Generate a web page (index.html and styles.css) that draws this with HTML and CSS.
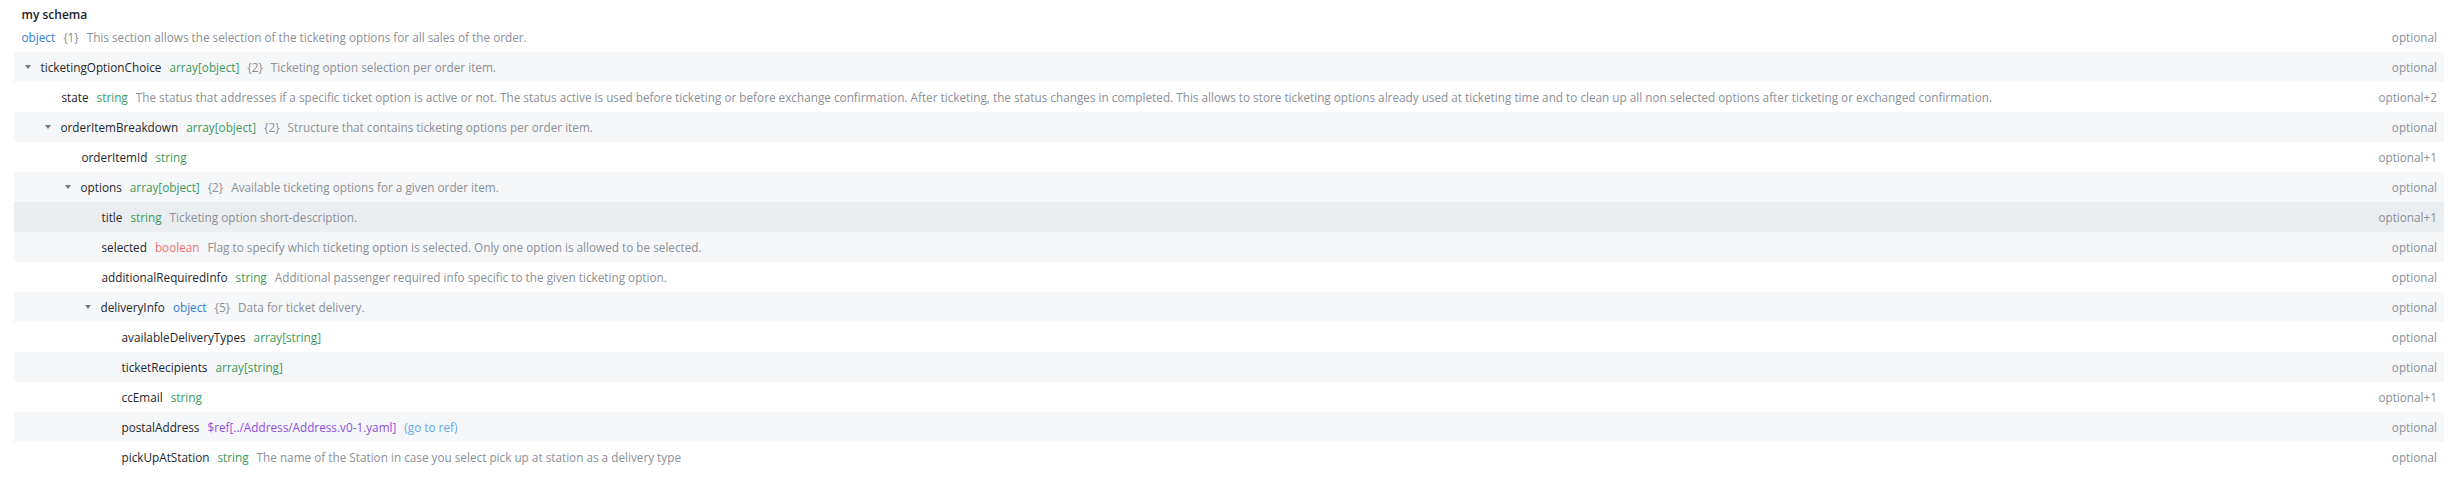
FILE: index.html
```html
<!DOCTYPE html>
<html lang="en">
<head>
<meta charset="utf-8">
<title>my schema</title>
<link rel="stylesheet" href="styles.css">
</head>
<body>
<div class="viewer">
  <div class="title">my schema</div>
  <div class="row root">
    <div class="main">
      <span class="type t-blue">object</span>
      <span class="count">{1}</span>
      <span class="desc">This section allows the selection of the ticketing options for all sales of the order.</span>
    </div>
    <div class="req">optional</div>
  </div>
  <div class="rows">
    <div class="row">
      <div class="main lvl-1"><span class="caret"></span><span class="name">ticketingOptionChoice</span><span class="type t-green">array[object]</span><span class="count">{2}</span><span class="desc">Ticketing option selection per order item.</span></div>
      <div class="req">optional</div>
    </div>
    <div class="row">
      <div class="main lvl-2"><span class="name">state</span><span class="type t-green">string</span><span class="desc">The status that addresses if a specific ticket option is active or not. The status active is used before ticketing or before exchange confirmation. After ticketing, the status changes in completed. This allows to store ticketing options already used at ticketing time and to clean up all non selected options after ticketing or exchanged confirmation.</span></div>
      <div class="req">optional+2</div>
    </div>
    <div class="row">
      <div class="main lvl-2"><span class="caret"></span><span class="name">orderItemBreakdown</span><span class="type t-green">array[object]</span><span class="count">{2}</span><span class="desc">Structure that contains ticketing options per order item.</span></div>
      <div class="req">optional</div>
    </div>
    <div class="row">
      <div class="main lvl-3"><span class="name">orderItemId</span><span class="type t-green">string</span></div>
      <div class="req">optional+1</div>
    </div>
    <div class="row">
      <div class="main lvl-3"><span class="caret"></span><span class="name">options</span><span class="type t-green">array[object]</span><span class="count">{2}</span><span class="desc">Available ticketing options for a given order item.</span></div>
      <div class="req">optional</div>
    </div>
    <div class="row hovered">
      <div class="main lvl-4"><span class="name">title</span><span class="type t-green">string</span><span class="desc">Ticketing option short-description.</span></div>
      <div class="req">optional+1</div>
    </div>
    <div class="row">
      <div class="main lvl-4"><span class="name">selected</span><span class="type t-red">boolean</span><span class="desc">Flag to specify which ticketing option is selected. Only one option is allowed to be selected.</span></div>
      <div class="req">optional</div>
    </div>
    <div class="row">
      <div class="main lvl-4"><span class="name">additionalRequiredInfo</span><span class="type t-green">string</span><span class="desc">Additional passenger required info specific to the given ticketing option.</span></div>
      <div class="req">optional</div>
    </div>
    <div class="row">
      <div class="main lvl-4"><span class="caret"></span><span class="name">deliveryInfo</span><span class="type t-blue">object</span><span class="count">{5}</span><span class="desc">Data for ticket delivery.</span></div>
      <div class="req">optional</div>
    </div>
    <div class="row">
      <div class="main lvl-5"><span class="name">availableDeliveryTypes</span><span class="type t-green">array[string]</span></div>
      <div class="req">optional</div>
    </div>
    <div class="row">
      <div class="main lvl-5"><span class="name">ticketRecipients</span><span class="type t-green">array[string]</span></div>
      <div class="req">optional</div>
    </div>
    <div class="row">
      <div class="main lvl-5"><span class="name">ccEmail</span><span class="type t-green">string</span></div>
      <div class="req">optional+1</div>
    </div>
    <div class="row">
      <div class="main lvl-5"><span class="name">postalAddress</span><span class="type t-purple">$ref[../Address/Address.v0-1.yaml]</span><a class="goto" href="#">(go to ref)</a></div>
      <div class="req">optional</div>
    </div>
    <div class="row">
      <div class="main lvl-5"><span class="name">pickUpAtStation</span><span class="type t-green">string</span><span class="desc">The name of the Station in case you select pick up at station as a delivery type</span></div>
      <div class="req">optional</div>
    </div>
  </div>
</div>
</body>
</html>
```
FILE: styles.css
```css
* { box-sizing: border-box; }

html, body {
  margin: 0;
  padding: 0;
  background: #ffffff;
}

body {
  font-family: "Open Sans", "Noto Sans", sans-serif;
  font-size: 11.75px;
  color: #2b2f36;
}

.viewer {
  padding: 0 6px 0 14px;
}

.title {
  padding: 8px 0 0 7.5px;
  height: 22px;
  line-height: 14px;
  font-size: 12px;
  font-weight: 600;
  color: #1e2227;
}

.row {
  display: flex;
  align-items: center;
  height: 30px;
  padding: 0 7px 0 7.5px;
}

.rows .row:nth-child(odd) {
  background: #f6f7f9;
}

.rows .row.hovered {
  background: #ebeef1;
}

.main {
  flex: 1;
  display: flex;
  align-items: center;
  gap: 8px;
  white-space: nowrap;
  min-width: 0;
}

.lvl-1 { padding-left: 20px; }
.lvl-2 { padding-left: 40px; }
.lvl-3 { padding-left: 60px; }
.lvl-4 { padding-left: 80px; }
.lvl-5 { padding-left: 100px; }

.caret {
  width: 0;
  height: 0;
  border-left: 3.5px solid transparent;
  border-right: 3.5px solid transparent;
  border-top: 4px solid #737880;
  margin-left: -17px;
  margin-right: 2px;
}

.name {
  color: #24282e;
}

.type.t-green { color: #3a9a5e; }
.type.t-blue { color: #2f7ed1; }
.type.t-red { color: #ee7272; }
.type.t-purple { color: #8f4fe0; }

.count {
  color: #8b9097;
}

.desc {
  color: #8b9097;
}

.goto {
  color: #5fa9ec;
  text-decoration: none;
}

.req {
  color: #8b9097;
  text-align: right;
  white-space: nowrap;
}
```
